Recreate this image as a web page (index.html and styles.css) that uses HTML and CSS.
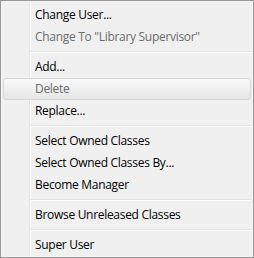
FILE: index.html
```html
<!DOCTYPE html>
<html lang="en">
<head>
  <meta charset="UTF-8">
  <meta name="viewport" content="width=device-width, initial-scale=1.0">
  <title>User Menu</title>
  <link rel="stylesheet" href="styles.css">
</head>
<body>
  <ul class="menu">
    <li class="item">Change User...</li>
    <li class="item disabled">Change To "Library Supervisor"</li>
    <li class="separator"></li>
    <li class="item">Add...</li>
    <li class="item disabled hover">Delete</li>
    <li class="item">Replace...</li>
    <li class="separator"></li>
    <li class="item">Select Owned Classes</li>
    <li class="item">Select Owned Classes By...</li>
    <li class="item">Become Manager</li>
    <li class="separator"></li>
    <li class="item">Browse Unreleased Classes</li>
    <li class="separator"></li>
    <li class="item">Super User</li>
  </ul>
</body>
</html>
```

FILE: styles.css
```css
body {
  margin: 0;
  font-family: "Open Sans", "Noto Sans", sans-serif;
  font-size: 12px;
  letter-spacing: -0.3px;
}
.menu {
  list-style: none;
  margin: 0;
  width: 254px;
  height: 258px;
  box-sizing: border-box;
  padding: 3px 2px 1px 2px;
  border: 1px solid #979797;
  box-shadow: inset 0 0 0 1px #f5f5f5;
  background:
    linear-gradient(to right, transparent 28px, #e2e3e3 28px, #e2e3e3 29px, #fff 29px, #fff 30px, transparent 30px),
    #f0f0f0;
}
.item {
  height: 22px;
  box-sizing: border-box;
  line-height: 20px;
  padding-left: 31px;
  border: 1px solid transparent;
  border-radius: 3px;
  color: #000;
  white-space: nowrap;
}
.item.disabled {
  color: #6d6d6d;
}
.item.hover {
  border-color: #d6d6d6;
  background: linear-gradient(#f9f9f9, #e6e6e6);
}
.separator {
  margin: 3px 0 3px 27px;
  border-top: 1px solid #e2e3e3;
  border-bottom: 1px solid #fff;
}
```
